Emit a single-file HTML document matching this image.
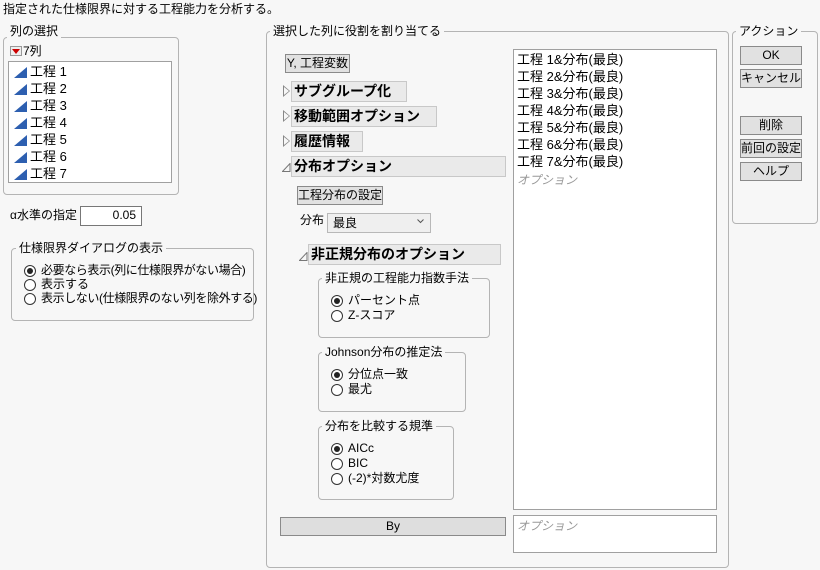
<!DOCTYPE html>
<html><head><meta charset="utf-8"><style>
*{box-sizing:border-box;margin:0;padding:0}
body{width:820px;height:570px;background:#f7f7f7;font-family:"Liberation Sans","Noto Sans CJK JP",sans-serif;font-size:12px;color:#000;position:relative;overflow:hidden}
.a{position:absolute;white-space:nowrap;line-height:15px}
.g{position:absolute;border:1px solid #b4b4b4;border-radius:4px}
.gl{position:absolute;background:#f7f7f7;padding:0 3px;line-height:14px;white-space:nowrap}
.box{position:absolute;background:#fff;border:1px solid #a0a0a0}
.btn{position:absolute;background:#e1e1e1;border:1px solid #8a8a8a;text-align:center;line-height:16px;white-space:nowrap}
.hd{position:absolute;background:#eaeaea;border:1px solid #c8c8c8;font-weight:bold;font-size:14px;line-height:19px;padding-left:2px;white-space:nowrap}
.tri{position:absolute;width:0;height:0;border-top:6px solid transparent;border-bottom:6px solid transparent;border-left:7px solid #888}
.tri i{position:absolute;left:-6px;top:-4px;width:0;height:0;border-top:4px solid transparent;border-bottom:4px solid transparent;border-left:5px solid #f7f7f7}
.otri{position:absolute;width:9px;height:9px}
.r{position:absolute;width:12px;height:12px;border:1px solid #333;border-radius:50%;background:#fff}
.r.on::after{content:"";position:absolute;left:2px;top:2px;width:6px;height:6px;border-radius:50%;background:#222}
.col{position:absolute;width:0;height:0;border-left:13px solid transparent;border-bottom:11px solid #2d5fb0}
.gray{color:#999;font-style:italic}
.li{font-size:13px}
</style></head><body>
<div class="a" style="left:3px;top:2px">指定された仕様限界に対する工程能力を分析する。</div>

<div class="g" style="left:3px;top:37px;width:176px;height:158px"></div>
<div class="gl" style="left:7px;top:24px">列の選択</div>
<div style="position:absolute;left:10px;top:46px;width:12px;height:10px;border:1px solid #999;background:#eee"></div>
<div style="position:absolute;left:12px;top:49px;border-left:4px solid transparent;border-right:4px solid transparent;border-top:5px solid #c00"></div>
<div class="a" style="left:23px;top:44px">7列</div>
<div class="box" style="left:8px;top:61px;width:164px;height:122px"></div>
<div class="col" style="left:14px;top:67px"></div><div class="a li" style="left:30px;top:64px">工程 1</div>
<div class="col" style="left:14px;top:84px"></div><div class="a li" style="left:30px;top:81px">工程 2</div>
<div class="col" style="left:14px;top:101px"></div><div class="a li" style="left:30px;top:98px">工程 3</div>
<div class="col" style="left:14px;top:118px"></div><div class="a li" style="left:30px;top:115px">工程 4</div>
<div class="col" style="left:14px;top:135px"></div><div class="a li" style="left:30px;top:132px">工程 5</div>
<div class="col" style="left:14px;top:152px"></div><div class="a li" style="left:30px;top:149px">工程 6</div>
<div class="col" style="left:14px;top:169px"></div><div class="a li" style="left:30px;top:166px">工程 7</div>

<div class="a" style="left:10px;top:208px">α水準の指定</div>
<div class="box" style="left:80px;top:206px;width:62px;height:20px;border-color:#777"></div>
<div class="a" style="left:80px;top:208px;width:56px;text-align:right">0.05</div>

<div class="g" style="left:11px;top:248px;width:243px;height:73px"></div>
<div class="gl" style="left:16px;top:241px">仕様限界ダイアログの表示</div>
<div class="r on" style="left:24px;top:265px"></div><div class="a" style="left:41px;top:263px;letter-spacing:-0.4px">必要なら表示(列に仕様限界がない場合)</div>
<div class="r" style="left:24px;top:279px"></div><div class="a" style="left:41px;top:277px">表示する</div>
<div class="r" style="left:24px;top:293px"></div><div class="a" style="left:41px;top:291px;letter-spacing:-0.4px">表示しない(仕様限界のない列を除外する)</div>

<div class="g" style="left:266px;top:31px;width:463px;height:537px"></div>
<div class="gl" style="left:270px;top:24px">選択した列に役割を割り当てる</div>
<div class="btn" style="left:285px;top:54px;width:65px;height:19px">Y, 工程変数</div>

<div class="tri" style="left:283px;top:85px"><i></i></div>
<div class="hd" style="left:291px;top:81px;width:116px;height:21px">サブグループ化</div>
<div class="tri" style="left:283px;top:110px"><i></i></div>
<div class="hd" style="left:291px;top:106px;width:146px;height:21px">移動範囲オプション</div>
<div class="tri" style="left:283px;top:135px"><i></i></div>
<div class="hd" style="left:291px;top:131px;width:72px;height:21px">履歴情報</div>
<svg class="otri" style="left:282px;top:163px" viewBox="0 0 9 9"><path d="M8 0.5V8.5H0.5Z" fill="none" stroke="#777"/></svg>
<div class="hd" style="left:291px;top:156px;width:215px;height:21px">分布オプション</div>
<div class="btn" style="left:297px;top:186px;width:86px;height:19px">工程分布の設定</div>
<div class="a" style="left:300px;top:213px">分布</div>
<div style="position:absolute;left:327px;top:213px;width:104px;height:20px;border:1px solid #b8b8b8;background:#efefef"></div>
<div class="a" style="left:333px;top:216px">最良</div>
<svg style="position:absolute;left:417px;top:219px" width="7" height="5"><path d="M0.5 0.5L3.5 3.5L6.5 0.5" fill="none" stroke="#555"/></svg>
<svg class="otri" style="left:299px;top:252px" viewBox="0 0 9 9"><path d="M8 0.5V8.5H0.5Z" fill="none" stroke="#777"/></svg>
<div class="hd" style="left:308px;top:244px;width:193px;height:21px">非正規分布のオプション</div>

<div class="g" style="left:318px;top:278px;width:172px;height:60px"></div>
<div class="gl" style="left:322px;top:271px">非正規の工程能力指数手法</div>
<div class="r on" style="left:331px;top:295px"></div><div class="a" style="left:348px;top:293px">パーセント点</div>
<div class="r" style="left:331px;top:310px"></div><div class="a" style="left:348px;top:308px">Z-スコア</div>

<div class="g" style="left:318px;top:352px;width:148px;height:60px"></div>
<div class="gl" style="left:322px;top:345px">Johnson分布の推定法</div>
<div class="r on" style="left:331px;top:369px"></div><div class="a" style="left:348px;top:367px">分位点一致</div>
<div class="r" style="left:331px;top:384px"></div><div class="a" style="left:348px;top:382px">最尤</div>

<div class="g" style="left:318px;top:426px;width:136px;height:74px"></div>
<div class="gl" style="left:322px;top:419px">分布を比較する規準</div>
<div class="r on" style="left:331px;top:443px"></div><div class="a" style="left:348px;top:441px">AICc</div>
<div class="r" style="left:331px;top:458px"></div><div class="a" style="left:348px;top:456px">BIC</div>
<div class="r" style="left:331px;top:473px"></div><div class="a" style="left:348px;top:471px">(-2)*対数尤度</div>

<div class="btn" style="left:280px;top:517px;width:226px;height:19px;background:#dedede">By</div>

<div class="box" style="left:513px;top:49px;width:204px;height:461px"></div>
<div class="a li" style="left:517px;top:52px">工程 1&amp;分布(最良)</div>
<div class="a li" style="left:517px;top:69px">工程 2&amp;分布(最良)</div>
<div class="a li" style="left:517px;top:86px">工程 3&amp;分布(最良)</div>
<div class="a li" style="left:517px;top:103px">工程 4&amp;分布(最良)</div>
<div class="a li" style="left:517px;top:120px">工程 5&amp;分布(最良)</div>
<div class="a li" style="left:517px;top:137px">工程 6&amp;分布(最良)</div>
<div class="a li" style="left:517px;top:154px">工程 7&amp;分布(最良)</div>
<div class="a gray" style="left:517px;top:173px">オプション</div>
<div class="box" style="left:513px;top:515px;width:204px;height:38px"></div>
<div class="a gray" style="left:517px;top:519px">オプション</div>

<div class="g" style="left:732px;top:31px;width:86px;height:193px"></div>
<div class="gl" style="left:736px;top:24px">アクション</div>
<div class="btn" style="left:740px;top:46px;width:62px;height:19px">OK</div>
<div class="btn" style="left:740px;top:69px;width:62px;height:19px">キャンセル</div>
<div class="btn" style="left:740px;top:116px;width:62px;height:19px">削除</div>
<div class="btn" style="left:740px;top:139px;width:62px;height:19px">前回の設定</div>
<div class="btn" style="left:740px;top:162px;width:62px;height:19px">ヘルプ</div>
</body></html>
